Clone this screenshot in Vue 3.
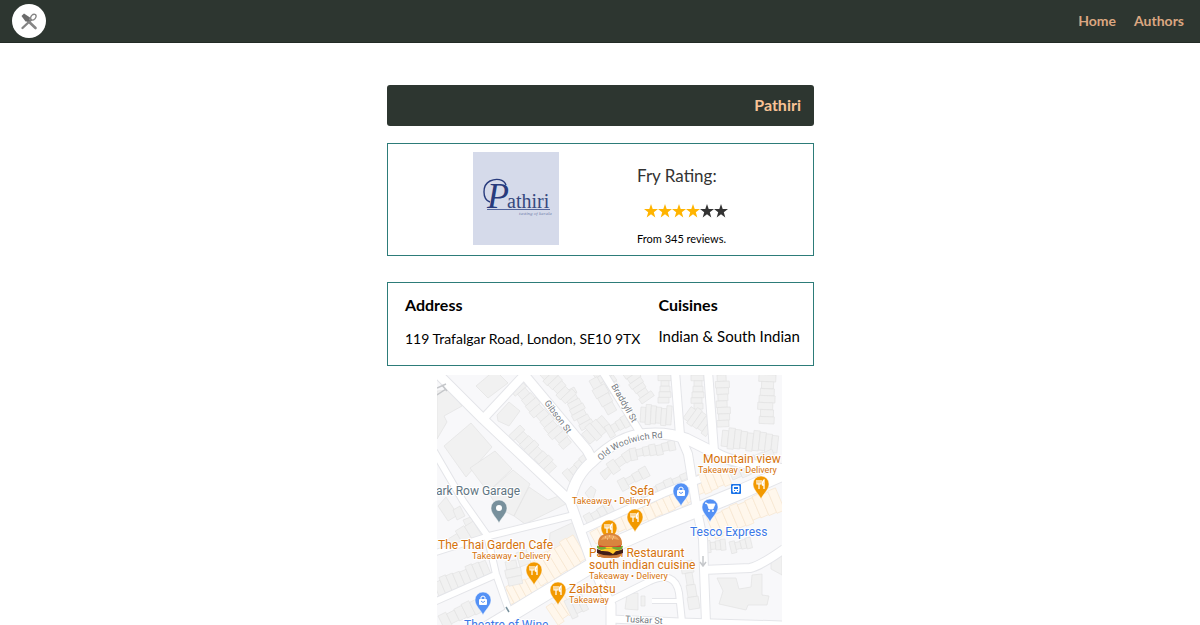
<script setup>
const stars = [true, true, true, true, false, false]

const roads = [
  { w: 9, d: 'M434 369 L483 418 L570 500 L577 520 L592 562 L604 590 L611 604 L611 630' },
  { w: 8, d: 'M483 418 L525 373' },
  { w: 9, d: 'M521 370 L587 449 L593 460' },
  { w: 10, d: 'M570 500 Q575 474 593 460 Q620 434 645 433 Q668 431 687 438 L717 453 Q735 463 782 468' },
  { w: 7, d: 'M601 368 L641 433' },
  { w: 8, d: 'M675 370 L680 434 L688 453 L696 503' },
  { w: 8, d: 'M708 370 L714 450' },
  { w: 6, d: 'M434 450 L463 500 L487 534 L496 573 L509 610' },
  { w: 6, d: 'M489 535 L574 514' },
  { w: 6, d: 'M434 601 L495 574' },
  { w: 5, d: 'M434 552 L488 535' },
  { w: 7, d: 'M584 528 L664 492 L700 478' },
  { w: 8, d: 'M696 505 L703 538 L704 568 L706 622' },
  { w: 8, d: 'M702 569 L750 567 Q760 565 784 548' },
  { w: 6, d: 'M610 600 L650 580 Q675 569 679 592 L682 621' },
  { w: 7, d: 'M610 618 L680 621 L784 624' },
  { w: 4, d: 'M652 600 L678 600' },
  { w: 14, d: 'M480 632 L528 603 L591 565 L620 541 L661 523 L699 508 L743 490 L786 471' },
]

// Each terrace runs from one point to another; depth is measured to its right.
function terrace(x1, y1, x2, y2, depth, count, warm = false) {
  const len = Math.hypot(x2 - x1, y2 - y1)
  const ux = (x2 - x1) / len
  const uy = (y2 - y1) / len
  const step = len / count
  return Array.from({ length: count }, (_, i) => {
    const inset = (i * 5) % 3
    const far = depth - ((i * 7) % 4)
    const point = (along, out) =>
      `${(x1 + ux * along - uy * out).toFixed(1)},${(y1 + uy * along + ux * out).toFixed(1)}`
    const a = i * step
    const b = a + step
    return { warm, points: [point(a, inset), point(b, inset), point(b, far), point(a, far)].join(' ') }
  })
}

const houses = [
  ...terrace(522, 380, 573, 440, 15, 11),
  ...terrace(520, 424, 558, 464, 16, 8),
  ...terrace(562, 472, 584, 453, 17, 4),
  ...terrace(574, 386, 594, 423, 16, 7),
  ...terrace(540, 374, 566, 402, -11, 6),
  ...terrace(592, 372, 608, 394, -14, 4),
  ...terrace(589, 380, 608, 414, -9, 4),
  ...terrace(590, 443, 611, 425, -13, 4),
  ...terrace(604, 426, 630, 411, 13, 5),
  ...terrace(640, 421, 671, 423, -15, 6),
  ...terrace(642, 403, 622, 374, 15, 6),
  ...terrace(671, 374, 671, 402, 13, 5),
  ...terrace(704, 374, 704, 408, 13, 6),
  ...terrace(683, 417, 707, 434, -14, 5),
  ...terrace(717, 374, 719, 426, -9, 8),
  ...terrace(776, 374, 774, 423, 17, 7),
  ...terrace(721, 445, 777, 451, -16, 9),
  ...terrace(606, 463, 628, 448, 13, 3),
  ...terrace(629, 448, 674, 439, 12, 7),
  ...terrace(617, 480, 645, 465, 12, 4),
  ...terrace(583, 515, 609, 500, 12, 4),
  ...terrace(639, 490, 687, 470, 10, 6),
  ...terrace(656, 516, 694, 498, -14, 6, true),
  ...terrace(619, 531, 655, 515, -16, 5, true),
  ...terrace(596, 543, 618, 531, -13, 3, true),
  ...terrace(698, 494, 731, 481, -16, 5, true),
  ...terrace(733, 479, 777, 460, -13, 5),
  ...terrace(706, 515, 775, 486, 25, 9, true),
  ...terrace(508, 605, 544, 586, -15, 6, true),
  ...terrace(541, 585, 587, 557, -25, 7, true),
  ...terrace(546, 606, 564, 594, 22, 3, true),
  ...terrace(564, 600, 581, 592, 20, 3),
  ...terrace(439, 595, 491, 573, -14, 8),
  ...terrace(438, 615, 484, 592, 16, 6),
  ...terrace(505, 561, 510, 585, -11, 3),
  ...terrace(455, 549, 481, 533, -13, 3),
  ...terrace(705, 540, 725, 538, 12, 4),
  ...terrace(729, 541, 750, 536, 12, 4),
  ...terrace(692, 559, 700, 607, 12, 4),
]

const blocks = [
  '437,390 450,389 462,405 444,415 447,421 437,438',
  '476,385 495,369 508,382 488,397',
  '497,414 509,401 520,410 509,425 498,420',
  '444,445 471,422 492,446 466,476',
  '470,467 495,450 512,468 488,491',
  '488,491 513,469 530,483 514,515 498,507',
  '514,515 529,486 548,499 564,493 570,501 525,523',
  '550,532 574,521 583,546 562,561 549,549',
  '446,496 458,514 448,520 438,505',
  '453,509 460,505 465,515 457,519',
  '463,519 473,515 477,525 468,530',
  '516,552 526,548 531,562 520,566',
  '627,593 638,592 638,609 625,608',
  '641,595 645,595 645,605 641,605',
  '717,577 736,577 739,588 751,586 752,574 762,573 762,594 769,595 767,604 748,604 746,609 719,603 723,590',
  '771,553 782,550 782,574 771,568',
  '585,492 591,485 596,489 592,501',
  '600,472 608,466 613,470 605,479',
]

const street = [
  { t: 'Gibson St', x: 544, y: 402, r: 53 },
  { t: 'Braddyll St', x: 611, y: 385, r: 60 },
  { t: 'Tuskar St', x: 625, y: 621, r: 3 },
]

const labels = [
  { t: 'ark Row Garage', x: 436, y: 494, s: 12, c: 'slate' },
  { t: 'Mountain view', x: 703, y: 462, s: 12, c: 'food' },
  { t: 'Takeaway • Delivery', x: 698, y: 472, s: 9, c: 'food' },
  { t: 'Sefa', x: 630, y: 494, s: 12, c: 'food' },
  { t: 'Takeaway • Delivery', x: 572, y: 503, s: 9, c: 'food' },
  { t: 'The Thai Garden Cafe', x: 438, y: 548, s: 12, c: 'food' },
  { t: 'Takeaway • Delivery', x: 472, y: 558, s: 9, c: 'food' },
  { t: 'Pathiri Restaurant', x: 589, y: 556, s: 12, c: 'food' },
  { t: 'south indian cuisine', x: 589, y: 568, s: 12, c: 'food' },
  { t: 'Takeaway • Delivery', x: 589, y: 578, s: 9, c: 'food' },
  { t: 'Zaibatsu', x: 569, y: 592, s: 12, c: 'food' },
  { t: 'Takeaway', x: 569, y: 602, s: 9, c: 'food' },
  { t: 'Tesco Express', x: 690, y: 535, s: 12, c: 'shop' },
  { t: 'Theatre of Wine', x: 464, y: 628, s: 12, c: 'shop' },
]

const pins = [
  { x: 499, y: 522, k: 'dot' },
  { x: 681, y: 505, k: 'bag' },
  { x: 710, y: 521, k: 'cart' },
  { x: 483, y: 614, k: 'bag' },
  { x: 761, y: 498, k: 'food' },
  { x: 635, y: 531, k: 'food' },
  { x: 609, y: 542, k: 'food' },
  { x: 534, y: 584, k: 'food' },
  { x: 558, y: 604, k: 'food' },
]
</script>

<template>
  <div class="page">
    <header class="bar">
      <a class="brand" href="#" aria-label="Home page">
        <svg viewBox="0 0 34 34" width="34" height="34" aria-hidden="true">
          <circle cx="17" cy="17" r="17" fill="#fff" />
          <g fill="none" stroke="#858585" stroke-linecap="round">
            <path d="M14 15 L23.5 24" stroke-width="2.6" />
            <path d="M19 16 L10.5 24" stroke-width="2.4" />
            <path d="M19 16 C17.5 12 21 9.5 23.5 10.5 C25.5 13 22 17 19 16 Z" stroke-width="1.3" />
          </g>
          <path d="M9.5 12 L12 9.5 L18 13.5 L17.5 17 L13.5 17.5 Z" fill="#6b6b6b" />
        </svg>
      </a>
      <nav class="links">
        <a href="#home">Home</a>
        <a href="#authors">Authors</a>
      </nav>
    </header>

    <main class="content">
      <h1 class="title">Pathiri</h1>

      <section class="card rating">
        <svg class="logo" viewBox="0 0 86 93" width="86" height="93" role="img" aria-label="Pathiri logo">
          <rect width="86" height="93" fill="#d5daea" />
          <path d="M17 50 C9 47 9 33 17 29 C23 26 31 27 33 33" fill="none" stroke="#283b7d" stroke-width="1.4" />
          <text x="14" y="56" class="logo-cap">P</text>
          <text x="34" y="56" class="logo-name">athiri</text>
          <path d="M14 57.5 H77" stroke="#53659c" stroke-width="1" />
          <text x="46" y="63" class="logo-tag">tasting of kerala</text>
        </svg>
        <div class="score">
          <h2>Fry Rating:</h2>
          <div class="stars" role="img" aria-label="4 out of 6 stars">
            <svg v-for="(on, i) in stars" :key="i" viewBox="0 0 14 14" width="14" height="14">
              <path :fill="on ? '#ffb400' : '#333'" d="M7 0 L8.7 5 H14 L9.8 8.2 L11.3 13.5 L7 10.3 L2.7 13.5 L4.2 8.2 L0 5 H5.3 Z" />
            </svg>
          </div>
          <p>From 345 reviews.</p>
        </div>
      </section>

      <section class="card info">
        <div>
          <h3>Address</h3>
          <p class="address">119 Trafalgar Road, London, SE10 9TX</p>
        </div>
        <div>
          <h3>Cuisines</h3>
          <p class="cuisines">Indian &amp; South Indian</p>
        </div>
      </section>

      <svg class="map" viewBox="437 374 345 251" role="img" aria-label="Map of the restaurant's surroundings">
        <rect x="437" y="374" width="345" height="251" fill="#f8f8fa" />
        <polygon v-for="(b, i) in blocks" :key="'b' + i" :points="b" class="block" />
        <polygon v-for="(h, i) in houses" :key="'h' + i" :points="h.points" :class="h.warm ? 'block warm' : 'block'" />
        <path v-for="(r, i) in roads" :key="'e' + i" :d="r.d" class="road edge" :stroke-width="r.w + 2" />
        <path v-for="(r, i) in roads" :key="'r' + i" :d="r.d" class="road" :stroke-width="r.w" />
        <g fill="none" stroke="#c5c7ca" stroke-width="1.5">
          <path d="M437 387 L446 383 M437 394 L446 388 M442 384 L447 390 M703 555 V564 M700 561 L703 565 L706 561" />
          <path d="M506 606 L509 611" stroke="#78909c" />
        </g>

        <path id="woolwich" d="M601 460 Q622 438 665 437" fill="none" />
        <text class="street"><textPath href="#woolwich">Old Woolwich Rd</textPath></text>
        <text v-for="s in street" :key="s.t" class="street" :transform="`translate(${s.x} ${s.y}) rotate(${s.r})`">{{ s.t }}</text>

        <g transform="translate(731 483)">
          <rect width="10" height="10" rx="1" fill="#1a73e8" />
          <path d="M2 2 H8 V7.5 H2 Z M3 7 V9 M7 7 V9" fill="#fff" stroke="#fff" />
          <path d="M3 3 H7 V5 H3 Z M3 6 H4 V7 H3 Z M6 6 H7 V7 H6 Z" fill="#1a73e8" />
        </g>

        <text v-for="(l, i) in labels" :key="'l' + i" :x="l.x" :y="l.y" :font-size="l.s" :class="['poi', l.c]">{{ l.t }}</text>

        <g v-for="(p, i) in pins" :key="'p' + i" :class="['pin', p.k]" :transform="`translate(${p.x} ${p.y})`">
          <path class="drop" d="M0 0 C-2 -5 -8 -9 -8 -15 A8 8 0 1 1 8 -15 C8 -9 2 -5 0 0 Z" />
          <circle v-if="p.k === 'dot'" cy="-15" r="3" fill="#fff" />
          <g v-else-if="p.k === 'food'" fill="none" stroke="#fff">
            <path d="M-4 -19 V-15 H0 V-19 M-2 -19 V-10" stroke-width="1.2" />
            <path d="M3 -10 V-19 Q1 -18 1.5 -14 H3" stroke-width="1.3" />
          </g>
          <g v-else-if="p.k === 'bag'">
            <rect x="-4" y="-16" width="8" height="6" rx="1" fill="#fff" />
            <path d="M-2 -16 V-18 Q0 -20 2 -18 V-16" fill="none" stroke="#fff" />
            <path d="M-2 -14 Q0 -11 2 -14" fill="none" stroke="#5491f5" />
          </g>
          <g v-else>
            <path d="M-5 -19 H-3 L-1 -13 H3 L5 -18 H-3 Z" fill="#fff" stroke="#fff" stroke-width="0.8" />
            <circle cx="-1" cy="-11" r="1" fill="#fff" />
            <circle cx="3" cy="-11" r="1" fill="#fff" />
          </g>
        </g>

        <g transform="translate(597 532)">
          <path d="M1 18 H25 Q25 25 19 25 H7 Q1 25 1 18 Z" fill="#cf7d3b" />
          <path d="M0 16 Q13 22 26 16 V20 Q13 25 0 20 Z" fill="#431f18" />
          <path d="M1 14 H25 L24 17 L19 18 L16 21 L11 18 L4 18 Z" fill="#ffc928" />
          <path d="M0 13 Q4 11 8 14 T16 14 T26 13 L25 16 Q21 18 17 16 T8 16 Q3 18 0 15 Z" fill="#73a936" />
          <path d="M2 11 H24 V14 H2 Z" fill="#d43c28" />
          <path d="M1 12 Q0 1 13 0 Q26 1 25 12 Q13 15 1 12 Z" fill="#d9843e" />
          <path d="M4 7 Q6 2 13 2 Q20 2 22 7 Q13 4 4 7 Z" fill="#eda45b" />
          <path d="M8 4 h1 M12 3 h1 M16 4 h1 M10 6 h1 M15 6 h1" stroke="#ffe0a8" />
        </g>
      </svg>
    </main>
  </div>
</template>

<style>
body {
  margin: 0;
  background: #fff;
}
</style>

<style scoped>
.page {
  font-family: Lato, "Open Sans", sans-serif;
  color: #000;
}

.bar {
  display: flex;
  align-items: center;
  justify-content: space-between;
  box-sizing: border-box;
  height: 43px;
  padding: 0 16px 0 12px;
  background: #2d3630;
  border-bottom: 1px solid #222a25;
}

.brand,
.brand svg {
  display: block;
}

.links {
  display: flex;
  gap: 18px;
}

.links a {
  color: #dba781;
  font-size: 14px;
  font-weight: 700;
  line-height: 20px;
  text-decoration: none;
}

.content {
  max-width: 428px;
  margin: 0 auto;
  padding: 42px 0 0 1px;
  box-sizing: border-box;
}

h1,
h2,
h3,
p {
  margin: 0;
}

.title {
  padding: 8px 13px 9px;
  background: #2d3630;
  border-radius: 3px;
  color: #f9c396;
  font-size: 16px;
  font-weight: 700;
  line-height: 24px;
  text-align: right;
}

.card {
  display: flex;
  box-sizing: border-box;
  border: 1px solid #2d7c79;
}

.rating {
  gap: 78px;
  margin-top: 17px;
  padding: 8px 0 9px 85px;
}

.logo {
  display: block;
}

.logo-cap {
  fill: #283b7d;
  font: italic 36px "Liberation Serif", serif;
}

.logo-name {
  fill: #35497f;
  font: 20px "Liberation Serif", serif;
}

.logo-tag {
  fill: #7583ae;
  font: italic 5px "Liberation Serif", serif;
}

.score h2 {
  padding-top: 14px;
  color: #333;
  font-size: 17px;
  font-weight: 400;
  line-height: 20px;
}

.stars {
  display: flex;
  padding: 18px 0 14px 7px;
}

.score p {
  font-size: 11px;
  line-height: 14px;
}

.info {
  gap: 18px;
  margin-top: 26px;
  padding: 11px 0 16px 17px;
}

.info h3 {
  font-size: 16px;
  font-weight: 700;
  line-height: 22px;
}

.info p {
  padding-top: 10px;
  line-height: 20px;
  white-space: nowrap;
}

.info .address {
  padding-top: 13px;
  font-size: 14px;
}

.info .cuisines {
  font-size: 15px;
}

.map {
  display: block;
  width: 345px;
  margin: 9px 0 0 50px;
}

.block {
  fill: #f1f1f1;
  stroke: #e2e2e3;
  stroke-width: 0.7px;
}

.warm {
  fill: #fff7ec;
  stroke: #f7e5cf;
}

.road {
  fill: none;
  stroke: #fff;
  stroke-linejoin: round;
}

.edge {
  stroke: #e4e5e9;
}

.street,
.poi {
  font-family: Roboto, sans-serif;
  stroke: #fff;
  stroke-width: 2px;
  paint-order: stroke;
}

.street {
  fill: #747980;
  font-size: 9px;
}

.food {
  fill: #d5730d;
}

.shop {
  fill: #3b78e7;
}

.slate {
  fill: #5f7582;
}

.drop {
  fill: #f29900;
  stroke: #fff;
  stroke-width: 0.5px;
}

.bag .drop,
.cart .drop {
  fill: #5491f5;
}

.dot .drop {
  fill: #78909c;
}
</style>
